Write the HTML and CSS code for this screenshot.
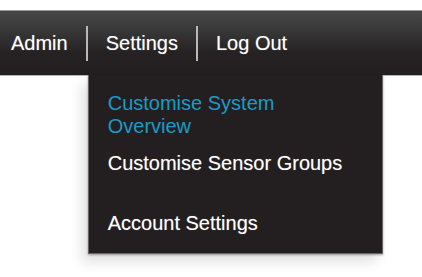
FILE: index.html
```html
<!DOCTYPE html>
<html lang="en">
<head>
    <meta charset="UTF-8">
    <title>Settings menu</title>
    <link rel="stylesheet" href="styles.css">
</head>
<body>
    <div class="menu-bar">
        <ul class="nav">
            <li class="nav-item first"><a href="#">Admin</a></li>
            <li class="sep"></li>
            <li class="nav-item open">
                <a href="#">Settings</a>
                <div class="dropdown">
                    <a class="drop-link active" href="#">Customise System Overview</a>
                    <a class="drop-link" href="#">Customise Sensor Groups</a>
                    <a class="drop-link last" href="#">Account Settings</a>
                </div>
            </li>
            <li class="sep"></li>
            <li class="nav-item"><a href="#">Log Out</a></li>
        </ul>
    </div>
</body>
</html>
```

FILE: styles.css
```css
html, body {
    min-height: 100vh;
}

body {
    margin: 0;
    padding: 10px 0 0;
    box-sizing: border-box;
    background: #fff;
    font-family: "Liberation Sans", Arial, sans-serif;
}

.menu-bar {
    height: 64px;
    border-top: 1px solid #9a9a9a;
    border-bottom: 1px solid #b5b5b5;
    background: linear-gradient(to bottom, #484848 0%, #383838 30%, #262223 65%, #231f20 100%);
}

.nav {
    list-style: none;
    margin: 0;
    padding: 0;
    height: 100%;
    display: flex;
}

.nav-item {
    position: relative;
    display: flex;
    align-items: center;
    padding: 0 18px;
}

.nav-item.first {
    padding-left: 11px;
}

.nav a {
    color: #fff;
    text-decoration: none;
    font-size: 20px;
    line-height: 23px;
    text-shadow: 0 0 1px rgba(255, 255, 255, 0.35);
}

.sep {
    align-self: center;
    width: 2px;
    height: 35px;
    background: linear-gradient(to right, #8a8a8a, #e8e8e8, #8a8a8a);
}

.dropdown {
    position: absolute;
    top: 100%;
    left: 0;
    z-index: 5;
    width: 295px;
    height: 179px;
    padding: 17px 0 0 19px;
    box-sizing: border-box;
    background: #231f20;
    border: 1px solid #666;
    border-top: none;
    box-shadow: 0 1px 2px rgba(0, 0, 0, 0.35), -6px 8px 12px rgba(0, 0, 0, 0.12);
}

.nav .drop-link {
    display: block;
    width: 245px;
    min-height: 46px;
    margin-bottom: 14px;
}

.nav .drop-link.active {
    color: #1b9bc3;
    text-shadow: none;
}
```
